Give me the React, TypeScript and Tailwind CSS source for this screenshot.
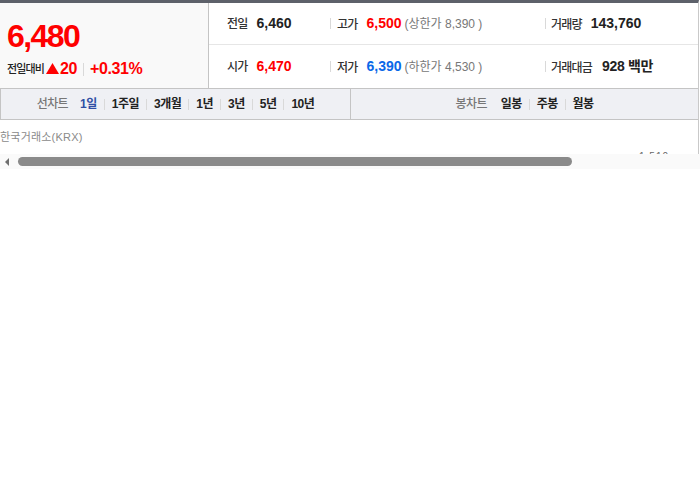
import React from 'react'

const font = { fontFamily: "'Liberation Sans', 'Noto Sans CJK KR', sans-serif" }

const Sep = ({ className = 'h-[11px]' }: { className?: string }) => (
  <span className={`inline-block w-px bg-[#d9d9d9] ${className}`} />
)

const Label: React.FC<{ children: React.ReactNode }> = ({ children }) => (
  <span className="text-[12px] font-medium tracking-[-0.8px] text-[#333]">{children}</span>
)

const App: React.FC = () => {
  const periods = ['1주일', '3개월', '1년', '3년', '5년', '10년']
  const candles = ['주봉', '월봉']

  return (
    <div className="w-[700px] h-[490px] bg-white" style={font}>
      <div className="w-[699px] border-t-[3px] border-t-[#5d616a] border-r border-r-[#c9c9c9]">
        {/* price summary */}
        <div className="flex h-[86px] border-b border-b-[#c4c4c4]">
          <div className="w-[209px] shrink-0 bg-[#f9f9f9] border-r border-r-[#c4c4c4] pl-[7px] pt-[16px]">
            <div className="text-[32px] leading-[34px] font-bold tracking-[-1.6px] text-[#f00]">6,480</div>
            <div className="flex items-center mt-[4px]">
              <span className="text-[11px] font-medium tracking-[-0.9px] text-[#222]">전일대비</span>
              <svg width="13" height="11" viewBox="0 0 13 11" className="ml-[2px] mb-[1px]">
                <path d="M6.5 0 L13 11 L0 11 Z" fill="#f00" />
              </svg>
              <span className="ml-[1px] text-[16px] font-bold tracking-[-0.3px] text-[#f00]">20</span>
              <Sep className="h-[13px] mx-[6px]" />
              <span className="text-[16px] font-bold tracking-[-0.4px] text-[#f00]">+0.31%</span>
            </div>
          </div>
          <div className="flex-1 flex flex-col">
            <div className="flex items-center h-[42px] border-b border-b-[#e6e6e6]">
              <div className="w-[121px] pl-[18px] flex items-center gap-[9px]">
                <Label>전일</Label>
                <span className="text-[14px] font-bold text-[#222]">6,460</span>
              </div>
              <div className="w-[215px] flex items-center">
                <Sep />
                <span className="ml-[6px]"><Label>고가</Label></span>
                <span className="ml-[9px] text-[14px] font-bold text-[#f00]">6,500</span>
                <span className="ml-[3px] text-[12px] text-[#777]">(상한가 8,390 )</span>
              </div>
              <div className="flex items-center">
                <Sep />
                <span className="ml-[5px]"><Label>거래량</Label></span>
                <span className="ml-[9px] text-[14px] font-bold text-[#222]">143,760</span>
              </div>
            </div>
            <div className="flex items-center flex-1">
              <div className="w-[121px] pl-[18px] flex items-center gap-[9px]">
                <Label>시가</Label>
                <span className="text-[14px] font-bold text-[#f00]">6,470</span>
              </div>
              <div className="w-[215px] flex items-center">
                <Sep />
                <span className="ml-[6px]"><Label>저가</Label></span>
                <span className="ml-[9px] text-[14px] font-bold text-[#0a68e8]">6,390</span>
                <span className="ml-[3px] text-[12px] text-[#777]">(하한가 4,530 )</span>
              </div>
              <div className="flex items-center">
                <Sep />
                <span className="ml-[5px]"><Label>거래대금</Label></span>
                <span className="ml-[10px] text-[14px] font-bold text-[#222] tracking-[-0.3px]">928 백만</span>
              </div>
            </div>
          </div>
        </div>

        {/* chart tabs */}
        <div className="flex h-[31px] bg-[#eff0f4] border-b border-b-[#c4c4c4] border-l border-l-[#c4c4c4]">
          <div className="w-[350px] shrink-0 border-r border-r-[#c4c4c4] flex items-center justify-center text-[12px]">
            <span className="text-[#777] font-medium tracking-[-0.6px]">선차트</span>
            <span className="ml-[12px] font-bold text-[#2f4fa5] tracking-[-0.5px]">1일</span>
            {periods.map((p) => (
              <React.Fragment key={p}>
                <Sep className="h-[11px] mx-[7px]" />
                <span className="font-bold text-[#222] tracking-[-0.5px]">{p}</span>
              </React.Fragment>
            ))}
          </div>
          <div className="flex-1 flex items-center justify-center text-[12px]">
            <span className="text-[#777] font-medium tracking-[-0.6px]">봉차트</span>
            <span className="ml-[14px] font-bold text-[#222] tracking-[-0.6px]">일봉</span>
            {candles.map((c) => (
              <React.Fragment key={c}>
                <Sep className="h-[11px] mx-[7px]" />
                <span className="font-bold text-[#222] tracking-[-0.6px]">{c}</span>
              </React.Fragment>
            ))}
          </div>
        </div>

        {/* chart area top */}
        <div className="h-[34px] relative">
          <div className="pt-[10px] text-[11px] leading-[14px] tracking-[0.2px] text-[#8a8a8a]">한국거래소(KRX)</div>
          <div className="absolute left-[639px] bottom-0 h-[3px] overflow-hidden">
            <div className="text-[10px] leading-[12px] text-[#666] tracking-[1px]">1,510</div>
          </div>
        </div>
      </div>

      {/* horizontal scrollbar */}
      <div className="flex items-center h-[15px] bg-[#fafafa]">
        <svg width="6" height="8" viewBox="0 0 6 8" className="ml-[4px]">
          <path d="M5 0 L5 8 L1 4 Z" fill="#6f6f6f" />
        </svg>
        <div className="ml-[8px] w-[554px] h-[9px] rounded-full bg-[#8a8a8a]" />
      </div>
    </div>
  )
}

export default App
